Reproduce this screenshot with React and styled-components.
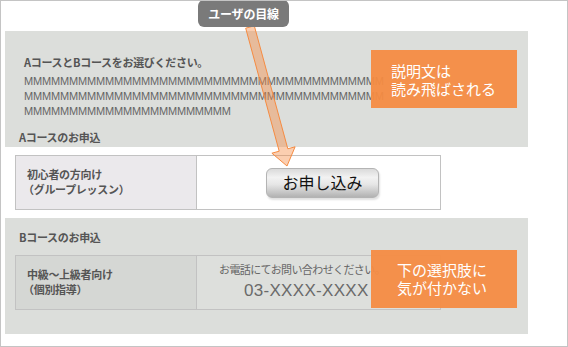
import React from "react";
import styled, { createGlobalStyle } from "styled-components";

const GlobalStyle = createGlobalStyle`
  html, body {
    margin: 0;
    padding: 0;
    background: #ffffff;
  }
  body {
    font-family: "Noto Sans CJK JP", "Liberation Sans", sans-serif;
  }
`;

const mLines = [40, 40, 23];

const App = () => {
  return (
    <>
      <GlobalStyle />
      <Frame>
        <Panel $pad="25px 0 2px 0">
          <Title>AコースとBコースをお選びください。</Title>
          <Filler>
            {mLines.map((count, i) => (
              <div key={i}>{"M".repeat(count)}</div>
            ))}
          </Filler>
          <SectionHeading $top="11px">Aコースのお申込</SectionHeading>
        </Panel>

        <CourseTable $bg="#ffffff">
          <LabelCell $bg="#ebe9ec">
            <span>初心者の方向け</span>
            <Paren>（グループレッスン）</Paren>
          </LabelCell>
          <ActionCell>
            <ApplyButton>お申し込み</ApplyButton>
          </ActionCell>
        </CourseTable>

        <Panel $pad="12px 0 24px 0" $gap="10px">
          <SectionHeading>Bコースのお申込</SectionHeading>
          <CourseTable $bg="#dddfdc">
            <LabelCell $bg="#d5d7d4">
              <span>中級～上級者向け</span>
              <Paren>（個別指導）</Paren>
            </LabelCell>
            <PhoneCell>
              <PhoneNote>お電話にてお問い合わせください。</PhoneNote>
              <PhoneNumber>03-XXXX-XXXX</PhoneNumber>
            </PhoneCell>
          </CourseTable>
        </Panel>

        <Arrow width="568" height="347" viewBox="0 0 568 347">
          <polygon
            points="245.7,28.2 279.2,151.2 271.9,153.2 287,166 295.1,146.8 287.8,148.8 254.3,25.8"
            fill="rgba(245,139,66,0.42)"
            stroke="#f58b42"
            strokeWidth="1"
          />
        </Arrow>
        <EyeTag>ユーザの目線</EyeTag>

        <Note $top="49px" $pad="12px 0 0 20px">
          説明文は
          <br />
          読み飛ばされる
        </Note>
        <Note $top="249px" $pad="11px 0 0 26px">
          下の選択肢に
          <br />
          気が付かない
        </Note>
      </Frame>
    </>
  );
};

export default App;

/* ------------------- STYLED COMPONENTS ------------------- */

const Frame = styled.div`
  position: relative;
  width: 568px;
  height: 347px;
  box-sizing: border-box;
  border: 1px solid #c4c4c4;
  background: #ffffff;
  padding: 30px 0 0 4px;
  overflow: hidden;
  display: flex;
  flex-direction: column;
  gap: 8px;
  color: #595959;
`;

const Panel = styled.div`
  width: 523px;
  box-sizing: border-box;
  background: #dcdedb;
  padding: ${(p) => p.$pad};
  display: flex;
  flex-direction: column;
  gap: ${(p) => p.$gap || "0"};
`;

const Title = styled.div`
  padding-left: 19px;
  font-size: 11px;
  font-weight: 700;
  line-height: 12px;
  letter-spacing: -0.3px;
  color: #555555;
`;

const Filler = styled.div`
  margin-top: 6px;
  padding-left: 19px;
  font-family: "Liberation Sans", sans-serif;
  font-size: 11px;
  line-height: 15px;
  letter-spacing: -0.17px;
  color: #666666;
`;

const SectionHeading = styled.div`
  margin-top: ${(p) => p.$top || "0"};
  padding-left: 14px;
  font-size: 11px;
  font-weight: 700;
  line-height: 15px;
  letter-spacing: -0.3px;
  color: #555555;
`;

const CourseTable = styled.div`
  margin-left: 10px;
  width: 426px;
  height: 55px;
  flex: none;
  box-sizing: border-box;
  border: 1px solid #c2c2c2;
  background: ${(p) => p.$bg};
  display: flex;
`;

const LabelCell = styled.div`
  width: 181px;
  box-sizing: border-box;
  border-right: 1px solid #c2c2c2;
  background: ${(p) => p.$bg};
  padding: 0 0 2px 11px;
  display: flex;
  flex-direction: column;
  justify-content: center;
  font-size: 11px;
  font-weight: 700;
  line-height: 15px;
  letter-spacing: -0.3px;
  color: #555555;
`;

const Paren = styled.span`
  margin-left: -4px;
`;

const ActionCell = styled.div`
  flex: 1;
  display: flex;
  align-items: center;
  padding-left: 69px;
`;

const ApplyButton = styled.button`
  width: 113px;
  height: 30px;
  border: 1px solid #b4b4b4;
  border-radius: 6px;
  background: linear-gradient(
    to bottom,
    #dadada 0%,
    #f2f2f2 30%,
    #e6e6e6 55%,
    #c4c4c4 85%,
    #b2b2b2 100%
  );
  box-shadow: 1px 2px 2px rgba(0, 0, 0, 0.12);
  font-family: "Noto Sans CJK JP", sans-serif;
  font-size: 16px;
  line-height: 18px;
  color: #111111;
  padding: 0 0 2px;
  cursor: pointer;
`;

const PhoneCell = styled.div`
  flex: 1;
  display: flex;
  flex-direction: column;
  justify-content: center;
  padding: 0 0 2px 22px;
  color: #666666;
`;

const PhoneNote = styled.div`
  font-size: 11px;
  line-height: 15px;
  letter-spacing: -0.6px;
`;

const PhoneNumber = styled.div`
  margin-top: 4px;
  padding-left: 25px;
  font-family: "Liberation Sans", sans-serif;
  font-size: 17px;
  line-height: 20px;
  letter-spacing: 0.3px;
  color: #6a6a6a;
`;

const Arrow = styled.svg`
  position: absolute;
  left: -1px;
  top: -1px;
  pointer-events: none;
`;

const EyeTag = styled.div`
  position: absolute;
  left: 197px;
  top: -1px;
  width: 91px;
  height: 27px;
  box-sizing: border-box;
  border-radius: 6px;
  background: #7a7a7a;
  color: #ffffff;
  font-size: 12px;
  font-weight: 700;
  line-height: 27px;
  text-align: center;
  letter-spacing: -0.2px;
`;

const Note = styled.div`
  position: absolute;
  left: 370px;
  top: ${(p) => p.$top};
  width: 146px;
  height: 58px;
  box-sizing: border-box;
  padding: ${(p) => p.$pad};
  background: rgba(245, 139, 66, 0.94);
  color: #ffffff;
  font-size: 15px;
  line-height: 18px;
`;
